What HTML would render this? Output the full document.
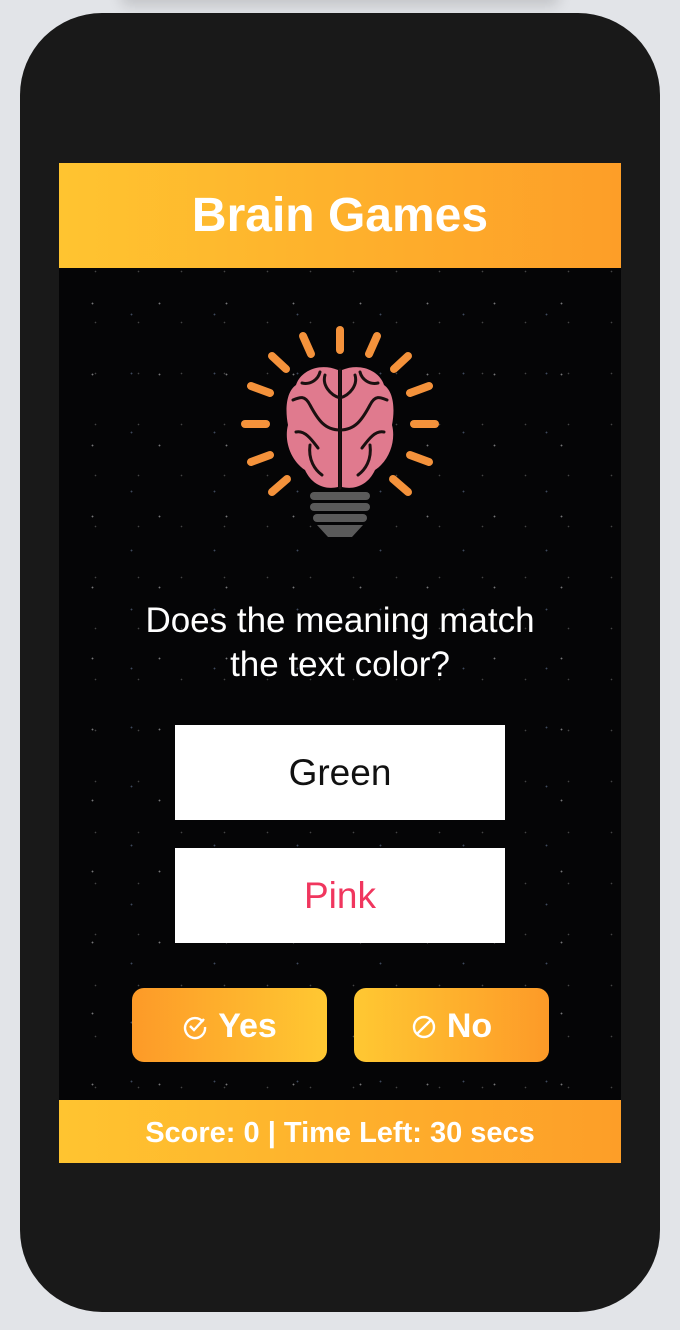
<!DOCTYPE html>
<html><head><meta charset="utf-8"><style>
html,body{margin:0;padding:0;width:680px;height:1330px;background:#e2e4e8;overflow:hidden;font-family:"Liberation Sans",sans-serif}
.shadow{position:absolute;left:120px;top:-20px;width:440px;height:20px;border-radius:12px;box-shadow:0 6px 14px rgba(0,0,0,.14)}
.phone{position:absolute;left:20px;top:13px;width:640px;height:1299px;background:#191919;border-radius:82px}
.screen{position:absolute;left:59px;top:163px;width:562px;height:1000px;background:#050506;overflow:hidden}
.hdr{position:absolute;left:0;top:0;width:562px;height:105px;background:linear-gradient(90deg,#ffc430,#fd9e28);color:#fff;font-weight:bold;font-size:48px;text-align:center;line-height:106px}
.stars{position:absolute;left:0;top:105px;width:562px;height:832px;background-image:radial-gradient(circle,rgba(255,255,255,.45) 0.7px,transparent 1.1px),radial-gradient(circle,rgba(170,200,255,.35) 0.7px,transparent 1.1px),radial-gradient(circle,rgba(255,255,255,.25) 0.6px,transparent 1px);background-size:67px 71px,83px 59px,43px 51px;background-position:0 0,31px 17px,15px 29px}
.q{position:absolute;left:0;top:436px;width:562px;text-align:center;color:#fff;font-size:35px;line-height:44px}
.box{position:absolute;left:116px;width:330px;height:95px;background:#fff;text-align:center;line-height:95px;font-size:37px}
.btn{position:absolute;top:825px;width:195px;height:74px;border-radius:12px;color:#fff;font-weight:bold;font-size:34px;text-align:center;line-height:76px}
.ftr{position:absolute;left:0;top:937px;width:562px;height:63px;background:linear-gradient(90deg,#ffc430,#fd9e28);color:#fff;font-weight:bold;font-size:29px;text-align:center;line-height:66px}
</style></head><body>
<div class="shadow"></div>
<div class="phone"></div>
<div class="screen">
<div class="hdr">Brain Games</div>
<div class="stars"></div>
<svg style="position:absolute;left:161px;top:147px" width="240" height="240" viewBox="220 310 240 240">
<g stroke="#f4923b" stroke-width="8" stroke-linecap="round" fill="none">
<line x1="340" y1="330" x2="340" y2="350"/>
<line x1="303" y1="336" x2="311" y2="354"/>
<line x1="377" y1="336" x2="369" y2="354"/>
<line x1="272" y1="356" x2="286" y2="369"/>
<line x1="408" y1="356" x2="394" y2="369"/>
<line x1="251" y1="386" x2="270" y2="393"/>
<line x1="429" y1="386" x2="410" y2="393"/>
<line x1="245" y1="424" x2="266" y2="424"/>
<line x1="435" y1="424" x2="414" y2="424"/>
<line x1="251" y1="462" x2="270" y2="455"/>
<line x1="429" y1="462" x2="410" y2="455"/>
<line x1="272" y1="492" x2="287" y2="479"/>
<line x1="408" y1="492" x2="393" y2="479"/>
</g>
<path d="M338 370 C318 362 300 372 296 385 C286 392 285 410 288 425 C284 440 290 460 305 470 C312 485 325 490 338 487 Z" fill="#e07a8e"/>
<path d="M342 370 C362 362 380 372 384 385 C394 392 395 410 392 425 C396 440 390 460 375 470 C368 485 355 490 342 487 Z" fill="#e07a8e"/>
<g stroke="#1a1010" stroke-width="3" fill="none" stroke-linecap="round">
<line x1="340" y1="370" x2="340" y2="488"/>
<path d="M340 430 C325 430 318 420 310 405 C305 395 300 397 293 400"/>
<path d="M325 375 C322 385 330 395 340 398"/>
<path d="M302 383 C310 385 318 380 320 372"/>
<path d="M296 432 C305 430 312 440 318 448"/>
<path d="M310 445 C308 460 315 470 322 475"/>
<path d="M340 430 C355 430 362 420 370 405 C375 395 380 397 387 400"/>
<path d="M355 375 C358 385 350 395 340 398"/>
<path d="M378 383 C370 385 362 380 360 372"/>
<path d="M384 432 C375 430 368 440 362 448"/>
<path d="M370 445 C372 460 365 470 358 475"/>
</g>
<g fill="#5a5a5a">
<rect x="310" y="492" width="60" height="8" rx="4"/>
<rect x="310" y="503" width="60" height="8" rx="4"/>
<rect x="313" y="514" width="54" height="8" rx="4"/>
<path d="M317 525 H363 L352 537 H328 Z"/>
</g>
</svg>
<div class="q">Does the meaning match<br>the text color?</div>
<div class="box" style="top:562px;color:#111">Green</div>
<div class="box" style="top:685px;color:#f0365e">Pink</div>
<div class="btn" style="left:73px;background:linear-gradient(90deg,#fd9a28,#ffc832)"><svg width="26" height="26" viewBox="0 0 26 26" style="vertical-align:-3px;margin-right:10px"><path d="M21 8 A10 10 0 1 0 23 13" stroke="#fff" stroke-width="2.4" fill="none"/><path d="M8 12 L12 16 L22 5" stroke="#fff" stroke-width="2.4" fill="none"/></svg>Yes</div>
<div class="btn" style="left:295px;background:linear-gradient(90deg,#ffc832,#fd9a28)"><svg width="26" height="26" viewBox="0 0 26 26" style="vertical-align:-3px;margin-right:10px"><circle cx="13" cy="13" r="10" stroke="#fff" stroke-width="2.4" fill="none"/><line x1="6" y1="20" x2="20" y2="6" stroke="#fff" stroke-width="2.4"/></svg>No</div>
<div class="ftr">Score: 0 | Time Left: 30 secs</div>
</div>
</body></html>
